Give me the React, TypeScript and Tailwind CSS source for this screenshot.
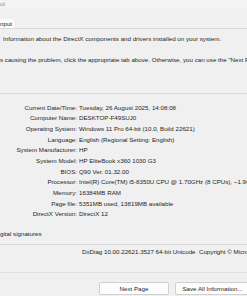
import React from 'react';

const rows: [string, string][] = [
  ['Current Date/Time:', 'Tuesday, 26 August 2025, 14:08:08'],
  ['Computer Name:', 'DESKTOP-F49SUJ0'],
  ['Operating System:', 'Windows 11 Pro 64-bit (10.0, Build 22621)'],
  ['Language:', 'English (Regional Setting: English)'],
  ['System Manufacturer:', 'HP'],
  ['System Model:', 'HP EliteBook x360 1030 G3'],
  ['BIOS:', 'Q90 Ver. 01.32.00'],
  ['Processor:', 'Intel(R) Core(TM) i5-8350U CPU @ 1.70GHz (8 CPUs), ~1.9GHz'],
  ['Memory:', '16384MB RAM'],
  ['Page file:', '5351MB used, 13819MB available'],
  ['DirectX Version:', 'DirectX 12'],
];

export default function App() {
  return (
    <div
      className="w-[247px] h-[296px] overflow-hidden bg-[#f0f0f0] text-[#1e1e1e] text-[6.2px] whitespace-nowrap"
      style={{ fontFamily: '"Liberation Sans", Arial, sans-serif' }}
    >
      {/* title bar */}
      <div className="h-[8px] leading-[7px] bg-[#f3f3f3] text-[#8c8c8c]">ol</div>

      {/* tabs */}
      <div className="mt-[11px] h-[10px] flex border-b border-[#d9d9d9]">
        <div className="w-[14px] h-[9px] leading-[9px] bg-[#fbfbfb]">nput</div>
      </div>

      <div className="mt-[5px] h-[10px] leading-[10px] pl-[3px]">
        Information about the DirectX components and drivers installed on your system.
      </div>
      <div className="mt-[11px] h-[10px] leading-[10px]">
        s causing the problem, click the appropriate tab above. Otherwise, you can use the "Next Page" button below to visit each page in sequence.
      </div>

      {/* system information group */}
      <div className="mt-[28px] border-t border-[#dadada] pt-[8.5px]">
        {rows.map(([label, value]) => (
          <div key={label} className="flex h-[10.7px] leading-[10.7px]">
            <div className="w-[77px] shrink-0 text-right">{label}</div>
            <div className="ml-[2px]">{value}</div>
          </div>
        ))}
      </div>

      <div className="mt-[9px] h-[10px] leading-[10px]">gital signatures</div>

      <div className="mt-[5px] border-t border-[#dadada] pt-[2px]">
        <div className="h-[10px] leading-[10px] pl-[82px]">
          DxDiag 10.00.22621.3527 64-bit Unicode&nbsp; Copyright © Microsoft. All rights reserved.
        </div>
      </div>

      <div className="mt-[15px] border-t border-[#e2e2e2]" />

      <div className="mt-[9px] flex gap-[6px] pl-[99px]">
        <button className="w-[70px] h-[13px] shrink-0 bg-[#fdfdfd] border border-[#d0d0d0] rounded-[2px] leading-[11px]">
          Next Page
        </button>
        <button className="w-[75px] h-[13px] shrink-0 bg-[#fdfdfd] border border-[#d0d0d0] rounded-[2px] leading-[11px]">
          Save All Information...
        </button>
      </div>
    </div>
  );
}
